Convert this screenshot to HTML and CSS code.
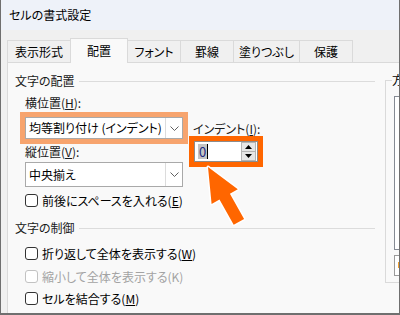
FILE: index.html
```html
<!DOCTYPE html>
<html>
  <head>
    <title>セルの書式設定</title>
    <link rel="stylesheet" href="styles.css">
  </head>
  <body>
    <div class="window">
      <div class="titlebar">セルの書式設定</div>

      <div class="tabs">
        <div class="tab t1">表示形式</div>
        <div class="tab t2 active">配置</div>
        <div class="tab t3">フォント</div>
        <div class="tab t4">罫線</div>
        <div class="tab t5">塗りつぶし</div>
        <div class="tab t6">保護</div>
      </div>

      <div class="panel">
        <div class="left">
          <div class="group_title"><span>文字の配置</span><i></i></div>

          <p class="label">横位置(<u>H</u>):</p>
          <div class="align_row">
            <div class="mark_soft">
              <div class="select">
                <span class="select_text">均等割り付け (インデント)</span>
                <span class="drop">
                  <svg width="9" height="5" viewBox="0 0 9 5"><polyline points="0.5,0.5 4.5,4.5 8.5,0.5" fill="none" stroke="#606060" stroke-width="1" /></svg>
                </span>
              </div>
            </div>
            <div class="indent">
              <p class="indent_label">インデント(<u>I</u>):</p>
              <div class="mark_strong">
                <div class="spin">
                  <span class="spin_value">0</span><span class="caret"></span>
                  <div class="spin_btns">
                    <span><svg width="7" height="4" viewBox="0 0 7 4"><polygon points="3.5,0 7,4 0,4" fill="#000" /></svg></span>
                    <span><svg width="7" height="4" viewBox="0 0 7 4"><polygon points="0,0 7,0 3.5,4" fill="#000" /></svg></span>
                  </div>
                </div>
              </div>
            </div>
          </div>

          <p class="label label_v">縦位置(<u>V</u>):</p>
          <div class="select select_v">
            <span class="select_text">中央揃え</span>
            <span class="drop">
              <svg width="9" height="5" viewBox="0 0 9 5"><polyline points="0.5,0.5 4.5,4.5 8.5,0.5" fill="none" stroke="#606060" stroke-width="1" /></svg>
            </span>
          </div>

          <div class="check check_space"><span class="box"></span>前後にスペースを入れる(<u>E</u>)</div>

          <div class="group_title second"><span>文字の制御</span><i></i></div>

          <div class="check check_first"><span class="box"></span>折り返して全体を表示する(<u>W</u>)</div>
          <div class="check disabled"><span class="box"></span>縮小して全体を表示する(K)</div>
          <div class="check"><span class="box"></span>セルを結合する(<u>M</u>)</div>
        </div>

        <fieldset class="direction">
          <legend>方</legend>
          <div class="listbox"></div>
          <div class="smallbox"><span></span></div>
        </fieldset>
      </div>

      <svg class="arrow" width="400" height="315" viewBox="0 0 400 315">
        <polygon
          points="208,168 237.8,190.2 229.9,194.7 244.1,220 233.7,225.8 219.5,200.5 211.6,205"
          fill="#ff6600"
          stroke="#ffffff"
          stroke-width="3"
          stroke-linejoin="round"
          paint-order="stroke"
        />
      </svg>
    </div>
  </body>
</html>
```

FILE: styles.css
```css
* {
  margin: 0px;
  padding: 0px;
  box-sizing: border-box;
}

body {
  background: #ffffff;
  font-family: "Noto Sans CJK JP", "Liberation Sans", sans-serif;
  font-size: 12px;
  font-feature-settings: "palt";
  color: #1a1a1a;
}

.window {
  position: relative;
  width: 400px;
  height: 315px;
  overflow: hidden;
  background: #f0f0f0;
  border-left: 1px solid #6f6f6f;
  border-right: 1px solid #6f6f6f;
  border-bottom: 2px solid #6f6f6f;
}

.titlebar {
  height: 30px;
  line-height: 30px;
  padding-left: 8px;
  background: #eef2f9;
  color: #000;
}

/* tabs */
.tabs {
  display: flex;
  align-items: flex-end;
  height: 32px;
  padding-left: 6px;
}

.tab {
  height: 22px;
  line-height: 21px;
  text-align: center;
  background: #f0f0f0;
  border: 1px solid #dadada;
  border-bottom: none;
  margin-left: -1px;
  color: #000;
}

.tab.t1 {
  margin-left: 0px;
  width: 64px;
}
.tab.t2 {
  width: 58px;
}
.tab.t3 {
  width: 54px;
}
.tab.t4 {
  width: 54px;
}
.tab.t5 {
  width: 67px;
}
.tab.t6 {
  width: 54px;
}

.tab.active {
  position: relative;
  z-index: 1;
  height: 25px;
  line-height: 24px;
  margin-bottom: -1px;
  background: #f9f9f9;
}

/* panel */
.panel {
  display: flex;
  align-items: flex-start;
  margin-left: 6px;
  height: 300px;
  padding: 10px 0px 0px 7px;
  background: #f9f9f9;
  border-top: 1px solid #dadada;
  border-left: 1px solid #dadada;
}

.left {
  width: 360px;
  flex-shrink: 0;
}

.group_title {
  display: flex;
  align-items: center;
  height: 16px;
  line-height: 16px;
}

.group_title i {
  flex: 1;
  height: 1px;
  margin-left: 4px;
  background: #dcdcdc;
}

.group_title.second {
  margin-top: 9px;
}

.label {
  margin: 6px 0px 0px 10px;
  height: 16px;
  line-height: 16px;
}

.label.label_v {
  margin-top: 0px;
}

.align_row {
  display: flex;
  align-items: flex-start;
  height: 32px;
  margin-top: 1px;
}

.mark_soft {
  margin-left: 5px;
  border: 5px solid #f7a46e;
}

.select {
  display: flex;
  align-items: center;
  width: 158px;
  height: 22px;
  background: #ffffff;
  border: 1px solid #a9a9a9;
}

.select_text {
  flex: 1;
  padding-left: 3px;
  line-height: 20px;
  color: #000;
}

.drop {
  display: flex;
  align-items: center;
  justify-content: center;
  width: 17px;
  height: 100%;
  border-left: 1px solid #dcdcdc;
}

.select_v {
  margin: 2px 0px 0px 10px;
  height: 25px;
}

.indent {
  margin-left: 1px;
  flex-shrink: 0;
}

.indent_label {
  margin-top: 10px;
  padding-left: 4px;
  height: 14px;
  line-height: 14px;
}

.mark_strong {
  width: 74px;
  border: 5px solid #ff6600;
}

.spin {
  display: flex;
  align-items: center;
  height: 21px;
  padding-left: 3px;
  background: #ffffff;
  border: 1px solid #8c8c8c;
}

.spin_value {
  height: 15px;
  line-height: 15px;
  padding: 0px 1px;
  font-size: 13px;
  background: #c4c4c4;
  color: #1d2a80;
}

.caret {
  width: 1px;
  height: 15px;
  background: #000;
}

.spin_btns {
  display: flex;
  flex-direction: column;
  margin-left: auto;
  margin-right: 1px;
  width: 15px;
  height: 19px;
}

.spin_btns span {
  display: flex;
  align-items: center;
  justify-content: center;
  flex: 1;
  background: #e6e6e6;
  border: 1px solid #b4b4b4;
}

.spin_btns span + span {
  border-top: none;
}

/* checkboxes */
.check {
  display: flex;
  align-items: center;
  height: 22px;
  margin-left: 10px;
  color: #000;
}

.check .box {
  width: 13px;
  height: 13px;
  margin-right: 4px;
  background: #ffffff;
  border: 1px solid #333333;
  border-radius: 3px;
}

.check_space {
  margin-top: 2px;
}

.check_first {
  margin-top: 6px;
}

.check.disabled {
  margin-top: 1px;
  color: #a3a3a3;
}

.check.disabled .box {
  border-color: #c2c2c2;
}

/* right side group */
.direction {
  flex-shrink: 0;
  width: 120px;
  height: 211px;
  margin: -1px 0px 0px 10px;
  padding: 0px 0px 6px 8px;
  border: 1px solid #dadada;
}

.direction legend {
  margin-left: -2px;
  line-height: 16px;
  color: #000;
}

.listbox {
  margin-top: 8px;
  height: 154px;
  background: #ffffff;
  border: 1px solid #858a93;
}

.smallbox {
  margin-top: 5px;
  height: 21px;
  padding: 6px 0px 0px 3px;
  background: #ffffff;
  border: 1px solid #9a9a9a;
}

.smallbox span {
  display: block;
  width: 2px;
  height: 6px;
  background: #f0a030;
}

.arrow {
  position: absolute;
  top: -1px;
  left: -1px;
  pointer-events: none;
}
```
